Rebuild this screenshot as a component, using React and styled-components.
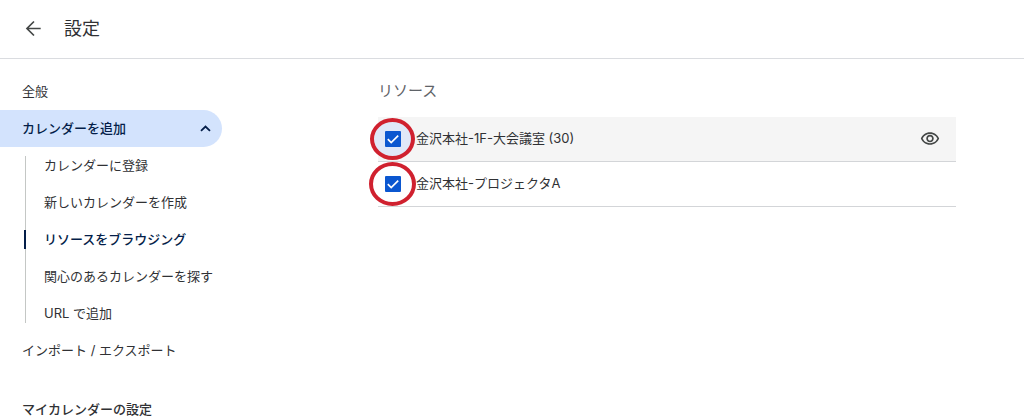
import { useState } from 'react'
import styled, { createGlobalStyle } from 'styled-components'

const GlobalStyle = createGlobalStyle`
  * {
    box-sizing: border-box;
  }

  body {
    margin: 0;
    background-color: #fff;
    color: #303134;
    font-family: Inter, "Noto Sans CJK JP", sans-serif;
    font-size: 13px;
    line-height: 19px;
  }
`

const Header = styled.header`
  display: flex;
  align-items: center;
  gap: 19px;
  height: 59px;
  padding: 0 22px 1px;
  border-bottom: 1px solid #dadce0;
`

const IconButton = styled.button`
  display: flex;
  padding: 0;
  border: none;
  background: none;
  color: #444746;
  cursor: pointer;
`

const Title = styled.h1`
  margin: 0;
  font-size: 18px;
  font-weight: 400;
  line-height: 24px;
`

const Layout = styled.div`
  display: flex;
`

const Sidebar = styled.nav`
  flex: none;
  width: 222px;
  padding-top: 14px;
  white-space: nowrap;
`

const NavLink = styled.a`
  display: flex;
  align-items: center;
  justify-content: space-between;
  height: 37px;
  padding: 0 10px 0 22px;
  border-radius: 0 19px 19px 0;
  background-color: ${({ $active }) => ($active ? '#d3e3fd' : 'transparent')};
  color: ${({ $active }) => ($active ? '#041e49' : 'inherit')};
  font-weight: ${({ $active }) => ($active ? 500 : 400)};
  text-decoration: none;
`

const SubList = styled.ul`
  display: flex;
  flex-direction: column;
  gap: 18px;
  margin: 9px 0 9px 25px;
  padding: 0;
  border-left: 1px solid #c4c7c5;
  list-style: none;
`

const SubLink = styled.a`
  display: block;
  height: 19px;
  margin-left: -2px;
  padding-left: 18px;
  border-left: 2px solid ${({ $active }) => ($active ? '#041e49' : 'transparent')};
  color: ${({ $active }) => ($active ? '#041e49' : 'inherit')};
  font-weight: ${({ $active }) => ($active ? 500 : 400)};
  text-decoration: none;
`

const SectionTitle = styled.h2`
  margin: 31px 0 0 22px;
  font-size: 13px;
  font-weight: 500;
  line-height: 19px;
`

const Main = styled.main`
  flex: 1;
  padding: 22px 68px 0 156px;
`

const Heading = styled.h2`
  margin: 0 0 16px;
  color: #5f6368;
  font-size: 15px;
  font-weight: 400;
  line-height: 20px;
`

const Rows = styled.ul`
  margin: 0;
  padding: 0;
  list-style: none;
`

const Row = styled.li`
  display: flex;
  align-items: center;
  justify-content: space-between;
  height: 45px;
  padding: 0 16px 1px 7px;
  border-bottom: 1px solid #d3d5d8;
  background-color: ${({ $hovered }) => ($hovered ? '#f5f5f5' : 'transparent')};
`

const Label = styled.label`
  display: flex;
  align-items: center;
  gap: 15px;
  cursor: pointer;
`

const CheckWrap = styled.span`
  position: relative;
  display: flex;
  width: 16px;
  height: 16px;
`

const Halo = styled.span`
  position: absolute;
  inset: -11px;
  border-radius: 50%;
  background-color: #e0e8f8;
`

const Checkbox = styled.input`
  position: relative;
  appearance: none;
  width: 16px;
  height: 16px;
  margin: 0;
  border: 2px solid #444746;
  border-radius: 1px;
  cursor: pointer;

  &:checked {
    border-color: #0b57d0;
    background-color: #0b57d0;
  }
`

const Tick = styled.svg`
  position: absolute;
  inset: 0;
  pointer-events: none;
`

const Ring = styled.span`
  position: absolute;
  inset: ${({ $wide }) => ($wide ? '-14px -15px -14px -16px' : '-13px -14px -13px -15px')};
  border: 4px solid #d0212f;
  border-radius: 50%;
  pointer-events: none;
`

const subItems = [
  'カレンダーに登録',
  '新しいカレンダーを作成',
  'リソースをブラウジング',
  '関心のあるカレンダーを探す',
  'URL で追加',
]

const resources = [
  { name: '金沢本社-1F-大会議室 (30)', hovered: true },
  { name: '金沢本社-プロジェクタA', hovered: false },
]

const BackIcon = () => (
  <svg width="23" height="23" viewBox="0 0 24 24" fill="none" stroke="currentColor" strokeWidth="1.8">
    <path d="M19.500 12H5.500M12.500 4.700 5.200 12l7.300 7.300" />
  </svg>
)

const ChevronIcon = () => (
  <svg width="13" height="13" viewBox="0 0 13 13" fill="none" stroke="currentColor" strokeWidth="1.8">
    <path d="M2 8.900 6.500 4.600l4.500 4.300" />
  </svg>
)

const EyeIcon = () => (
  <svg width="20" height="20" viewBox="0 0 24 24" fill="currentColor">
    <path d="M12 6a9.77 9.77 0 0 1 8.82 5.5 9.77 9.77 0 0 1-17.64 0A9.77 9.77 0 0 1 12 6m0-2C7 4 2.73 7.11 1 11.5 2.73 15.89 7 19 12 19s9.27-3.11 11-7.5C21.27 7.11 17 4 12 4zm0 5a2.5 2.5 0 0 1 0 5 2.5 2.5 0 0 1 0-5m0-2c-2.48 0-4.500 2.02-4.500 4.500S9.520 16 12 16s4.500-2.020 4.500-4.500S14.480 7 12 7z" />
  </svg>
)

const Resource = ({ name, hovered }) => {
  const [checked, setChecked] = useState(true)

  return (
    <Row $hovered={hovered}>
      <Label>
        <CheckWrap>
          {hovered && <Halo />}
          <Checkbox type="checkbox" checked={checked} onChange={() => setChecked(!checked)} />
          {checked && (
            <Tick width="16" height="16" viewBox="0 0 16 16" fill="none" stroke="#fff" strokeWidth="1.7">
              <path d="M2.800 8.200 6.200 11.600 13.200 4.600" />
            </Tick>
          )}
          <Ring $wide={!hovered} />
        </CheckWrap>
        {name}
      </Label>
      {hovered && (
        <IconButton aria-label="プレビュー">
          <EyeIcon />
        </IconButton>
      )}
    </Row>
  )
}

const App = () => {
  return (
    <>
      <GlobalStyle />
      <Header>
        <IconButton aria-label="戻る">
          <BackIcon />
        </IconButton>
        <Title>設定</Title>
      </Header>
      <Layout>
        <Sidebar>
          <NavLink href="#general">全般</NavLink>
          <NavLink href="#add" $active>
            カレンダーを追加
            <ChevronIcon />
          </NavLink>
          <SubList>
            {subItems.map((item) => (
              <li key={item}>
                <SubLink href="#add" $active={item === 'リソースをブラウジング'}>{item}</SubLink>
              </li>
            ))}
          </SubList>
          <NavLink href="#import">インポート / エクスポート</NavLink>
          <SectionTitle>マイカレンダーの設定</SectionTitle>
        </Sidebar>
        <Main>
          <Heading>リソース</Heading>
          <Rows>
            {resources.map((resource) => (
              <Resource key={resource.name} {...resource} />
            ))}
          </Rows>
        </Main>
      </Layout>
    </>
  )
}

export default App
